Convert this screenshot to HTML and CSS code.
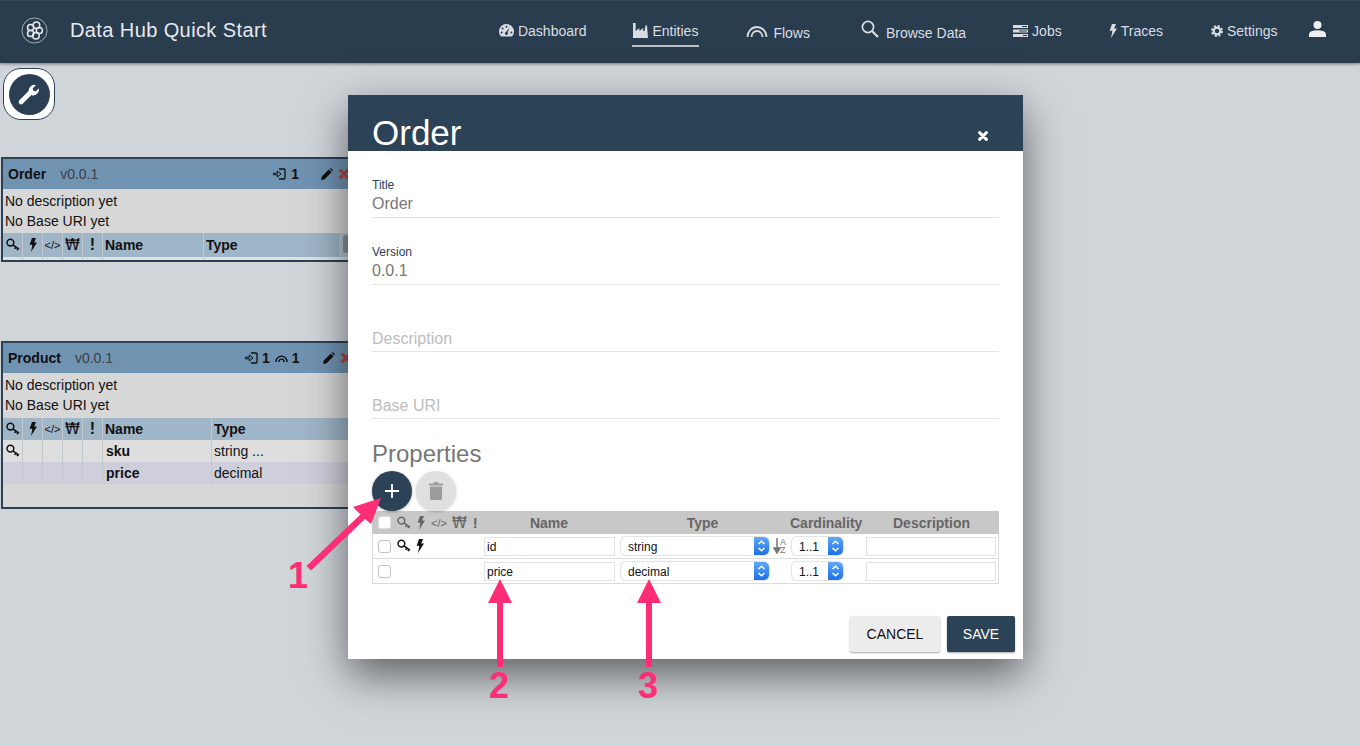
FILE: index.html

```html
<!DOCTYPE html>
<html>
<head>
    <meta charset="UTF-8">
    <title>Data Hub Quick Start</title>
    <link rel="stylesheet" href="styles.css">
</head>
<body>
    <svg class="defs" width="0" height="0">
        <symbol id="i-key" viewBox="0 0 14 14">
            <circle cx="4.4" cy="4.6" r="3.4" fill="none" stroke="currentColor" stroke-width="1.5"/>
            <path d="M6.8 6.8 L13 11.2 M9.8 9 L8.6 10.8 M12 10.4 L11 12.2" fill="none" stroke="currentColor" stroke-width="1.5"/>
        </symbol>
        <symbol id="i-bolt" viewBox="0 0 8 14">
            <path d="M3 0 H7 L5.2 4.4 H8 L2 14 L3.4 6.8 H.6 Z" fill="currentColor"/>
        </symbol>
        <symbol id="i-signin" viewBox="0 0 13 12">
            <path d="M6 1 H11 Q12 1 12 2 V10 Q12 11 11 11 H6" fill="none" stroke="currentColor" stroke-width="1.3"/>
            <path d="M.5 5.2 H4.4 V3 L8 6 L4.4 9 V6.8 H.5 Z" fill="none" stroke="currentColor" stroke-width="1"/>
        </symbol>
        <symbol id="i-arcs" viewBox="0 0 22 14">
            <path d="M1.5 13 A9.5 10 0 0 1 20.5 13" fill="none" stroke="currentColor" stroke-width="1.8"/>
            <path d="M5.5 13 A5.5 6 0 0 1 16.5 13" fill="none" stroke="currentColor" stroke-width="1.8"/>
        </symbol>
        <symbol id="i-arcs-small" viewBox="0 0 22 14">
            <path d="M1.5 13 A9.5 10 0 0 1 20.5 13" fill="none" stroke="currentColor" stroke-width="2.4"/>
            <path d="M6.5 13 A4.5 5 0 0 1 15.5 13" fill="none" stroke="currentColor" stroke-width="2.4"/>
        </symbol>
        <symbol id="i-pencil" viewBox="0 0 12 12">
            <path d="M0 12 L.8 8.4 L7.8 1.4 L10.6 4.2 L3.6 11.2 Z M8.6 .6 Q9.4 -.2 10.2 .4 L11.6 1.8 Q12.2 2.6 11.4 3.4 Z" fill="currentColor"/>
        </symbol>
        <symbol id="i-cross" viewBox="0 0 10 10">
            <path d="M1.6 1.6 L8.4 8.4 M8.4 1.6 L1.6 8.4" stroke="currentColor" stroke-width="3" stroke-linecap="round"/>
        </symbol>
        <symbol id="i-updown" viewBox="0 0 15 18">
            <path d="M4.5 7 L7.5 4.2 L10.5 7 M4.5 11 L7.5 13.8 L10.5 11" fill="none" stroke="#fff" stroke-width="1.5"/>
        </symbol>
    </svg>

    <header class="topbar">
        <svg class="logo" width="27" height="27" viewBox="0 0 28 28">
            <circle cx="14" cy="14" r="13" fill="none" stroke="#c6cdd3" stroke-width=".8"/>
            <g fill="none" stroke="#e6e9ec" stroke-width="1.6">
                <circle cx="10" cy="11" r="3.2"/>
                <circle cx="10" cy="17" r="3.2"/>
                <circle cx="16" cy="8.5" r="3.4"/>
                <circle cx="19" cy="14" r="3.2"/>
                <circle cx="15.5" cy="19.5" r="3.4"/>
            </g>
        </svg>
        <div class="brand">Data Hub Quick Start</div>
        <nav class="nav">
            <a class="nav-item nav-dashboard">
                <svg width="15" height="13" viewBox="0 0 15 13"><path d="M7.5 0 A7.5 7.5 0 0 1 13.6 11.8 Q13.2 12.6 12.2 12.6 H2.8 Q1.8 12.6 1.4 11.8 A7.5 7.5 0 0 1 7.5 0 Z" fill="currentColor"/><g fill="#2a3d4f"><circle cx="7.5" cy="2.8" r="1"/><circle cx="3.6" cy="4.6" r="1"/><circle cx="2.6" cy="8.4" r="1"/><circle cx="12.4" cy="8.4" r="1"/><path d="M10.8 3.6 L8.6 8.2 A1.6 1.6 0 1 1 6.9 7.9 Z"/></g></svg>
                <span>Dashboard</span>
            </a>
            <a class="nav-item nav-entities is-active">
                <svg width="15" height="15" viewBox="0 0 15 15"><path d="M0 0 H2.6 V8 L6.4 5 V8 L10.2 5 V8 H11.6 L12.4 2.5 H14 L15 15 H0 Z" fill="currentColor"/></svg>
                <span>Entities</span>
            </a>
            <a class="nav-item nav-flows">
                <svg width="22" height="14"><use href="#i-arcs"/></svg>
                <span>Flows</span>
            </a>
            <a class="nav-item nav-browse">
                <svg width="18" height="18" viewBox="0 0 18 18"><circle cx="7" cy="7" r="5.6" fill="none" stroke="currentColor" stroke-width="1.7"/><path d="M11 11 L17 17" stroke="currentColor" stroke-width="2.2"/></svg>
                <span>Browse Data</span>
            </a>
            <a class="nav-item nav-jobs">
                <svg width="15" height="12" viewBox="0 0 15 12"><path d="M0 0 H15 V3 H0 Z M0 4.5 H15 V7.5 H0 Z M0 9 H15 V12 H0 Z" fill="currentColor"/><path d="M9 1.5 H14 M6 6 H14 M10 10.5 H14" stroke="#2a3d4f"/></svg>
                <span>Jobs</span>
            </a>
            <a class="nav-item nav-traces">
                <svg width="8" height="14"><use href="#i-bolt"/></svg>
                <span>Traces</span>
            </a>
            <a class="nav-item nav-settings">
                <svg width="12" height="12" viewBox="0 0 12 12"><circle cx="6" cy="6" r="3.3" fill="none" stroke="currentColor" stroke-width="2.2"/><circle cx="6" cy="6" r="5" fill="none" stroke="currentColor" stroke-width="2" stroke-dasharray="2.2 1.73"/></svg>
                <span>Settings</span>
            </a>
            <a class="nav-item nav-user">
                <svg width="17" height="16" viewBox="0 0 17 16"><circle cx="8.5" cy="4" r="4" fill="currentColor"/><path d="M0 16 V13.4 Q0 11 3 10 Q8.5 8.6 14 10 Q17 11 17 13.4 V16 Z" fill="currentColor"/></svg>
            </a>
        </nav>
    </header>

    <main class="canvas">
        <button class="tools-btn" type="button">
            <span class="tools-circle">
                <svg width="24" height="24" viewBox="0 0 24 24"><path d="M4 20 L13 11" stroke="#fff" stroke-width="4.6" stroke-linecap="round"/><path d="M11.4 9 A6.2 6.2 0 0 1 19 3 L15.6 6.6 L16.4 8.8 L18.6 9.6 L22 6.2 A6.2 6.2 0 0 1 15 13.4 Z" fill="#fff"/></svg>
            </span>
        </button>

        <section class="entity entity-order">
            <div class="entity-head">
                <b class="entity-name">Order</b><span class="entity-version">v0.0.1</span>
                <svg class="ic-signin" width="13" height="12"><use href="#i-signin"/></svg><b class="count">1</b>
                <svg class="ic-pencil" width="12" height="12"><use href="#i-pencil"/></svg>
                <svg class="ic-cross" width="10" height="10"><use href="#i-cross"/></svg>
            </div>
            <div class="entity-info">No description yet</div>
            <div class="entity-info">No Base URI yet</div>
            <div class="prop-row prop-head">
                <span class="cell"><svg width="14" height="14"><use href="#i-key"/></svg></span>
                <span class="cell"><svg width="8" height="14"><use href="#i-bolt"/></svg></span>
                <span class="cell code">&lt;/&gt;</span>
                <span class="cell won">₩</span>
                <span class="cell mark">!</span>
                <span class="cell name">Name</span>
                <span class="cell type">Type</span>
                <span class="scroll-thumb"></span>
            </div>
            <div class="prop-foot">
                <span class="cell"></span><span class="cell"></span><span class="cell"></span><span class="cell"></span><span class="cell"></span><span class="cell name"></span>
            </div>
        </section>

        <section class="entity entity-product">
            <div class="entity-head">
                <b class="entity-name">Product</b><span class="entity-version">v0.0.1</span>
                <svg class="ic-signin" width="13" height="12"><use href="#i-signin"/></svg><b class="count">1</b>
                <svg class="ic-arcs" width="13" height="9"><use href="#i-arcs-small"/></svg><b class="count">1</b>
                <svg class="ic-pencil" width="12" height="12"><use href="#i-pencil"/></svg>
                <svg class="ic-cross" width="10" height="10"><use href="#i-cross"/></svg>
            </div>
            <div class="entity-info">No description yet</div>
            <div class="entity-info">No Base URI yet</div>
            <div class="prop-row prop-head">
                <span class="cell"><svg width="14" height="14"><use href="#i-key"/></svg></span>
                <span class="cell"><svg width="8" height="14"><use href="#i-bolt"/></svg></span>
                <span class="cell code">&lt;/&gt;</span>
                <span class="cell won">₩</span>
                <span class="cell mark">!</span>
                <span class="cell name">Name</span>
                <span class="cell type">Type</span>
            </div>
            <div class="prop-row prop-odd">
                <span class="cell"><svg width="14" height="14"><use href="#i-key"/></svg></span>
                <span class="cell"></span><span class="cell"></span><span class="cell"></span><span class="cell"></span>
                <span class="cell name">sku</span>
                <span class="cell type">string ...</span>
            </div>
            <div class="prop-row prop-even">
                <span class="cell"></span><span class="cell"></span><span class="cell"></span><span class="cell"></span><span class="cell"></span>
                <span class="cell name">price</span>
                <span class="cell type">decimal</span>
            </div>
        </section>
    </main>

    <div class="modal">
        <div class="modal-head">
            <h1 class="modal-title">Order</h1>
            <svg class="modal-close" width="10" height="10"><use href="#i-cross"/></svg>
        </div>
        <div class="modal-body">
            <div class="field"><label>Title</label><div class="value">Order</div></div>
            <div class="field"><label>Version</label><div class="value">0.0.1</div></div>
            <div class="field"><label></label><div class="value empty">Description</div></div>
            <div class="field"><label></label><div class="value empty">Base URI</div></div>

            <h2 class="section-title">Properties</h2>
            <div class="round-btns">
                <button class="round round-add" type="button">
                    <svg width="14" height="14" viewBox="0 0 14 14"><path d="M7 0 V14 M0 7 H14" stroke="#fff" stroke-width="1.8"/></svg>
                </button>
                <button class="round round-del" type="button">
                    <svg width="14" height="18" viewBox="0 0 14 18"><path d="M5 0 H9 L9.6 1.4 H14 V3.4 H0 V1.4 H4.4 Z M1 4.6 H13 V16.4 Q13 18 11.4 18 H2.6 Q1 18 1 16.4 Z" fill="#9c9c9c"/></svg>
                </button>
            </div>

            <div class="grid">
                <div class="grid-row grid-head">
                    <div class="flags">
                        <span class="check check-head"></span>
                        <svg class="f-key" width="14" height="14"><use href="#i-key"/></svg>
                        <svg class="f-bolt" width="8" height="14"><use href="#i-bolt"/></svg>
                        <span class="f-code">&lt;/&gt;</span>
                        <span class="f-won">₩</span>
                        <span class="f-mark">!</span>
                    </div>
                    <div class="col-title">Name</div>
                    <div class="col-title">Type</div>
                    <div class="col-title">Cardinality</div>
                    <div class="col-title">Description</div>
                </div>
                <div class="grid-row">
                    <div class="flags">
                        <span class="check"></span>
                        <svg class="f-key" width="14" height="14"><use href="#i-key"/></svg>
                        <svg class="f-bolt-on" width="8" height="14"><use href="#i-bolt"/></svg>
                    </div>
                    <div class="input name-input">id</div>
                    <div class="type-cell">
                        <div class="select select-type">string<svg class="caret" width="15" height="18"><use href="#i-updown"/></svg></div>
                        <svg class="sort" width="14" height="16" viewBox="0 0 14 16"><path d="M4 0 V13 M1 10 L4 15 L7 10 Z" stroke="#777" stroke-width="1.5" fill="#777"/></svg>
                        <span class="sort-letters">A<br>Z</span>
                    </div>
                    <div class="select select-card">1..1<svg class="caret" width="15" height="18"><use href="#i-updown"/></svg></div>
                    <div class="input desc-input"></div>
                </div>
                <div class="grid-row">
                    <div class="flags"><span class="check"></span></div>
                    <div class="input name-input">price</div>
                    <div class="type-cell">
                        <div class="select select-type">decimal<svg class="caret" width="15" height="18"><use href="#i-updown"/></svg></div>
                    </div>
                    <div class="select select-card">1..1<svg class="caret" width="15" height="18"><use href="#i-updown"/></svg></div>
                    <div class="input desc-input"></div>
                </div>
            </div>

            <div class="modal-actions">
                <button class="btn btn-cancel" type="button">CANCEL</button>
                <button class="btn btn-save" type="button">SAVE</button>
            </div>
        </div>
    </div>

    <svg class="arrows" width="1360" height="746" viewBox="0 0 1360 746">
        <g fill="#ff2d75">
            <path d="M381 498 L353 507 L360.5 514.5 L306.5 566 L311 570.5 L365 519 L371 524 Z"/>
            <path d="M500 579 L488 603 L497 603 V667 H503 V603 L512 603 Z"/>
            <path d="M649 579 L637 603 L646 603 V667 H652 V603 L661 603 Z"/>
        </g>
    </svg>
    <span class="callout callout-1">1</span>
    <span class="callout callout-2">2</span>
    <span class="callout callout-3">3</span>
</body>
</html>
```

FILE: styles.css

```css
* {
    box-sizing: border-box;
}
html, body {
    margin: 0;
    height: 100%;
    overflow: hidden;
}
body {
    position: relative;
    background: #d0d5da;
    font-family: "Liberation Sans", Arial, sans-serif;
    font-size: 14px;
    color: #111;
}
.defs {
    position: absolute;
}
svg {
    display: block;
    flex: none;
}

/* top bar */
.topbar {
    display: flex;
    align-items: center;
    height: 63px;
    padding: 0 0 4px 21px;
    background: #2a3d4f;
    border-top: 1px solid #33475a;
    box-shadow: 0 1px 3px rgba(0, 0, 0, .45);
}
.brand {
    margin-left: 22px;
    font-size: 20px;
    letter-spacing: .4px;
    color: #e6e9ec;
}
.nav {
    display: flex;
    align-self: stretch;
    margin-left: 232px;
    color: #d9dde1;
}
.nav-item {
    display: flex;
    align-items: center;
    gap: 4px;
    height: 46px;
    padding-top: 15px;
    border-bottom: 2px solid transparent;
}
.nav-entities {
    margin-left: 46px;
    padding: 15px 1px 0;
    gap: 4px;
    border-bottom-color: #b9c2ca;
}
.nav-entities svg {
    margin-top: -1px;
}
.nav-flows {
    margin-left: 47px;
    gap: 5px;
    padding-top: 20px;
}
.nav-flows svg {
    margin-top: -5px;
}
.nav-browse {
    margin-left: 51px;
    gap: 7px;
    padding-top: 20px;
}
.nav-browse svg {
    margin-top: -8px;
}
.nav-jobs {
    margin-left: 47px;
}
.nav-traces {
    margin-left: 47px;
}
.nav-settings {
    margin-left: 48px;
}
.nav-user {
    margin-left: 31px;
    padding-top: 11px;
    color: #eceef0;
}

/* canvas with the entity boxes */
.canvas {
    position: relative;
    height: 683px;
    padding: 5px 0 0 3px;
}
.tools-btn {
    display: flex;
    align-items: center;
    justify-content: center;
    width: 52px;
    height: 52px;
    padding: 0;
    background: #fff;
    border: 1px solid #2c4257;
    border-radius: 18px;
}
.tools-circle {
    display: flex;
    align-items: center;
    justify-content: center;
    width: 41px;
    height: 41px;
    background: #2a3f53;
    border-radius: 50%;
}
.entity {
    position: absolute;
    left: 1px;
    width: 380px;
    background: #d7d7d7;
    border: 2px solid #2b4256;
}
.entity-order {
    top: 94px;
    height: 105px;
}
.entity-product {
    top: 278px;
    height: 168px;
}
.entity-head {
    display: flex;
    align-items: center;
    height: 30px;
    padding-left: 5px;
    background: #7093b2;
}
.entity-version {
    margin-left: 14px;
    color: #3a3f45;
}
.entity-order .ic-signin {
    margin-left: 175px;
}
.entity-product .ic-signin {
    margin-left: 132px;
}
.count {
    margin-left: 5px;
}
.entity-product .count {
    margin-left: 4px;
}
.ic-arcs {
    margin-left: 5px;
}
.entity-order .ic-pencil {
    margin-left: 22px;
}
.entity-product .ic-pencil {
    margin-left: 23px;
}
.ic-cross {
    margin-left: 6px;
    color: #b3433f;
}
.entity-info {
    height: 20px;
    padding-left: 2px;
    line-height: 20px;
}
.entity-head + .entity-info {
    margin-top: 2px;
}
.prop-row {
    position: relative;
    display: flex;
    height: 22px;
    line-height: 22px;
}
.prop-head {
    margin-top: 2px;
    height: 24px;
    background: #9fb5c8;
    font-weight: bold;
}
.entity-product .prop-head {
    margin-top: 3px;
    height: 22px;
}
.prop-odd {
    background: #dedede;
}
.prop-even {
    background: #cfcfdc;
}
.cell {
    display: flex;
    align-items: center;
    justify-content: center;
    width: 20px;
    height: 100%;
    border-right: 1px solid #c2c8cd;
}
.cell.name {
    justify-content: flex-start;
    width: 101px;
    padding-left: 2px;
    font-weight: bold;
}
.entity-product .cell.name {
    width: 109px;
}
.prop-odd .cell.name, .prop-even .cell.name {
    padding-left: 3px;
}
.cell.type {
    justify-content: flex-start;
    width: 100px;
    padding-left: 2px;
    border-right: 0;
}
.prop-odd .cell.type, .prop-even .cell.type {
    font-weight: normal;
}
.cell.code {
    font-size: 11px;
    font-weight: normal;
}
.cell.won {
    font-family: "DejaVu Sans", sans-serif;
    font-size: 15px;
    font-weight: normal;
}
.cell.mark {
    font-size: 16px;
}
.scroll-thumb {
    position: absolute;
    left: 340px;
    top: 2px;
    width: 8px;
    height: 18px;
    background: #8f9498;
    border-radius: 3px;
}
.entity-order .prop-head {
    background: linear-gradient(to right, #9fb5c8 336px, #b4c4d2 336px);
}
.prop-foot {
    display: flex;
    height: 3px;
    background: #e0e0e0;
}

/* modal */
.modal {
    position: absolute;
    left: 348px;
    top: 95px;
    width: 675px;
    height: 564px;
    background: #fff;
    box-shadow: 0 16px 40px rgba(0, 0, 0, .55);
}
.modal-head {
    position: relative;
    height: 56px;
    padding: 20px 0 0 24px;
    background: #2c4257;
    color: #fff;
}
.modal-title {
    margin: 0;
    font-size: 35px;
    font-weight: normal;
    line-height: 36px;
}
.modal-close {
    position: absolute;
    left: 630px;
    top: 36px;
}
.modal-body {
    padding: 27px 24px 0;
}
.field {
    height: 40px;
    margin-bottom: 27px;
    border-bottom: 1px solid #e4e4e4;
}
.field label {
    display: block;
    height: 14px;
    font-size: 12px;
    line-height: 14px;
    color: #2c4257;
}
.value {
    margin-top: 2px;
    font-size: 16px;
    line-height: 20px;
    color: #777;
}
.value.empty {
    margin-top: 3px;
    color: #bdbdbd;
}
.section-title {
    margin: -7px 0 0;
    font-size: 24px;
    font-weight: normal;
    line-height: 30px;
    color: #777;
}
.round-btns {
    display: flex;
    gap: 4px;
    margin-top: 2px;
}
.round {
    display: flex;
    align-items: center;
    justify-content: center;
    width: 40px;
    height: 40px;
    padding: 0;
    border: 0;
    border-radius: 50%;
}
.round-add {
    background: #2c4257;
    box-shadow: 0 1px 3px rgba(0, 0, 0, .3);
}
.round-del {
    background: #e0e0e0;
    box-shadow: 0 1px 3px rgba(0, 0, 0, .2);
}
.grid {
    width: 627px;
    border: 1px solid #dcdcdc;
    border-top: 0;
}
.grid-row {
    display: grid;
    grid-template-columns: 111px 136px 171px 75px 132px;
    align-items: center;
    height: 25px;
    border-bottom: 1px solid #dcdcdc;
}
.grid-row:last-child {
    height: 24px;
    border-bottom: 0;
}
.grid-head {
    height: 23px;
    margin: 0 -1px;
    width: 627px;
    background: #c8c8c8;
    border-bottom: 0;
}
.flags {
    display: flex;
    align-items: center;
    height: 100%;
    padding-left: 5px;
}
.check {
    width: 13px;
    height: 13px;
    background: #fff;
    border: 1px solid #c4c4c4;
    border-radius: 3px;
}
.check-head {
    margin-left: 1px;
    border-color: #ddd;
}
.f-key {
    margin-left: 6px;
}
.grid-head .f-key {
    margin-left: 6px;
    color: #666;
}
.f-bolt {
    margin-left: 6px;
    color: #666;
}
.f-bolt-on {
    margin-left: 5px;
}
.f-code {
    margin-left: 6px;
    font-size: 11px;
    color: #666;
}
.f-won {
    margin-left: 5px;
    font-family: "DejaVu Sans", sans-serif;
    font-size: 15px;
    color: #666;
}
.f-mark {
    margin-left: 6px;
    font-size: 15px;
    font-weight: bold;
    color: #666;
}
.col-title {
    padding-right: 4px;
    font-weight: bold;
    text-align: center;
    color: #666;
}
.col-title:last-child {
    padding: 0 0 0 1px;
}
.input {
    height: 19px;
    padding-left: 2px;
    font-size: 12px;
    line-height: 19px;
    color: #111;
    background: #fff;
    border: 1px solid #e2e2e2;
}
.name-input {
    width: 131px;
}
.desc-input {
    width: 130px;
}
.type-cell {
    position: relative;
    display: flex;
    align-items: center;
}
.select {
    position: relative;
    height: 18px;
    margin-left: 1px;
    padding-left: 7px;
    font-size: 12px;
    line-height: 20px;
    background: #fff;
    border-radius: 5px;
    box-shadow: 0 0 1px 1px #e2e2e2;
}
.select-type {
    width: 148px;
}
.select-card {
    width: 51px;
}
.caret {
    position: absolute;
    right: 0;
    top: 0;
    background: linear-gradient(#5fa9f8, #1d6fe8);
    border-radius: 0 5px 5px 0;
}
.sort {
    margin-left: 4px;
}
.sort-letters {
    margin-left: -7px;
    font-size: 9px;
    line-height: 8px;
    color: #777;
}
.modal-actions {
    position: absolute;
    right: 8px;
    bottom: 7px;
    display: flex;
    gap: 7px;
}
.btn {
    height: 36px;
    padding: 0;
    font-family: inherit;
    font-size: 14px;
    border: 0;
    border-radius: 2px;
}
.btn-cancel {
    width: 90px;
    color: #111;
    background: #ececec;
    box-shadow: 0 1px 2px rgba(0, 0, 0, .35);
}
.btn-save {
    width: 68px;
    color: #fff;
    background: #2c4257;
    box-shadow: 0 1px 2px rgba(0, 0, 0, .35);
}

/* pink callouts drawn over the screenshot */
.arrows {
    position: absolute;
    left: 0;
    top: 0;
    pointer-events: none;
}
.callout {
    position: absolute;
    font-size: 36px;
    font-weight: bold;
    line-height: 40px;
    color: #ff2d75;
}
.callout-1 {
    left: 288px;
    top: 556px;
}
.callout-2 {
    left: 489px;
    top: 666px;
}
.callout-3 {
    left: 638px;
    top: 666px;
}
```
